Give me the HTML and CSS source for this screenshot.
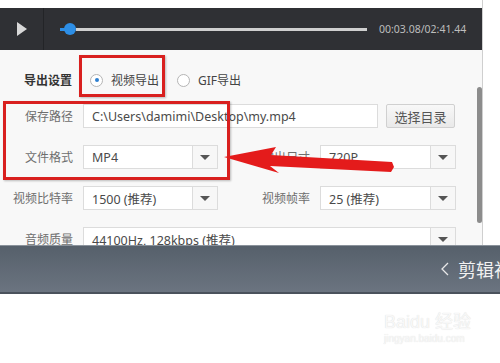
FILE: index.html
```html
<!DOCTYPE html>
<html lang="zh-CN">
<head>
    <meta charset="UTF-8">
    <title>导出设置</title>
    <link rel="stylesheet" href="styles.css">
</head>
<body>
<div class="screen">
    <div class="window">
        <!-- player bar -->
        <div class="player">
            <div class="play">
                <svg width="10" height="14" viewBox="0 0 10 14"><polygon points="0,0 10,7 0,14" fill="#d8d8d8"/></svg>
            </div>
            <div class="track">
                <div class="done"></div>
                <div class="knob"></div>
                <div class="rest"></div>
            </div>
            <div class="time">00:03.08/02:41.44</div>
        </div>

        <!-- export settings -->
        <div class="panel">
            <div class="row head">
                <span class="label strong">导出设置</span>
                <span class="radio on"></span><span class="opt">视频导出</span>
                <span class="radio"></span><span class="opt">GIF导出</span>
            </div>
            <div class="row">
                <span class="label">保存路径</span>
                <div class="field path">C:\Users\damimi\Desktop\my.mp4</div>
                <div class="btn">选择目录</div>
            </div>
            <div class="row">
                <span class="label">文件格式</span>
                <div class="select"><span class="val">MP4</span><span class="drop"></span></div>
                <span class="label second">输出尺寸</span>
                <div class="select wide"><span class="val">720P</span><span class="drop"></span></div>
            </div>
            <div class="row">
                <span class="label">视频比特率</span>
                <div class="select"><span class="val">1500 (推荐)</span><span class="drop"></span></div>
                <span class="label second">视频帧率</span>
                <div class="select wide"><span class="val">25 (推荐)</span><span class="drop"></span></div>
            </div>
            <div class="row">
                <span class="label">音频质量</span>
                <div class="select full"><span class="val">44100Hz, 128kbps (推荐)</span><span class="drop"></span></div>
            </div>
            <div class="scroll"></div>
        </div>
    </div>

    <!-- bottom bar -->
    <div class="footer">
        <svg class="back" width="8" height="14" viewBox="0 0 8 14"><polyline points="7,1 1,7 7,13" fill="none" stroke="#e8e8e8" stroke-width="1.3"/></svg>
        <span class="crumb">剪辑视频</span>
    </div>

    <!-- annotations -->
    <div class="mark mark-radio"></div>
    <div class="mark mark-fields"></div>
    <svg class="arrow" width="500" height="363" viewBox="0 0 500 363">
        <polygon points="224,157 276,147 271,155 392,162 394,167 391,172 270,166 279,173" fill="#e41b1b"/>
    </svg>

    <div class="watermark">
        <div class="logo">Bai<span class="paw">du</span> 经验</div>
        <div class="site">jingyan.baidu.com</div>
    </div>
</div>
</body>
</html>
```

FILE: styles.css
```css
body {
    margin: 0;
    background: #ffffff;
    font-family: "Noto Sans", "Noto Sans CJK SC", sans-serif;
}
.screen {
    position: relative;
    width: 500px;
    height: 363px;
    overflow: hidden;
}
.window {
    width: 482px;
    padding-top: 8px;
    border-right: 1px solid #cfcfcf;
}

/* player */
.player {
    height: 42px;
    background: #2f3034;
    display: flex;
    align-items: center;
}
.play {
    width: 43px;
    height: 42px;
    border-right: 1px solid #232427;
    display: flex;
    align-items: center;
    justify-content: center;
}
.track {
    margin-left: 16px;
    width: 307px;
    display: flex;
    align-items: center;
}
.done {
    width: 5px;
    height: 3px;
    background: #2d8ee6;
}
.knob {
    width: 12px;
    height: 12px;
    border-radius: 50%;
    background: #2d8ee6;
    margin-left: -1px;
}
.rest {
    flex: 1;
    height: 3px;
    background: #cfcfcf;
}
.time {
    margin-left: 12px;
    font-size: 10.5px;
    color: #bdbdbd;
}

/* panel */
.panel {
    position: relative;
    height: 177px;
    padding-top: 18px;
    background: #f8f8f8;
    overflow: hidden;
}
.row {
    display: flex;
    align-items: center;
    height: 24px;
    margin-bottom: 17px;
}
.row.head {
    margin-bottom: 12px;
}
.label {
    width: 73px;
    margin-right: 10px;
    text-align: right;
    font-size: 12px;
    color: #6e6e6e;
    white-space: nowrap;
}
.label.strong {
    width: 72px;
    margin-right: 0;
    font-weight: bold;
    color: #333333;
}
.label.second {
    width: 48px;
    margin-left: 44px;
}
.radio {
    width: 11px;
    height: 11px;
    border: 1px solid #b5b5b5;
    border-radius: 50%;
    background: #ffffff;
    margin-left: 18px;
    display: flex;
    align-items: center;
    justify-content: center;
}
.radio.on::after {
    content: "";
    width: 4px;
    height: 4px;
    border-radius: 50%;
    background: #2d7fd0;
}
.opt {
    margin-left: 8px;
    font-size: 12px;
    color: #444444;
}
.field, .select {
    height: 22px;
    border: 1px solid #dcdcdc;
    background: #ffffff;
    font-size: 12.5px;
    color: #4a4a4a;
    display: flex;
    align-items: center;
}
.field {
    width: 285px;
    padding-left: 8px;
}
.btn {
    margin-left: 8px;
    width: 67px;
    height: 22px;
    border: 1px solid #d0d0d0;
    border-radius: 2px;
    background: linear-gradient(#f8f8f8, #e9e9e9);
    font-size: 13px;
    color: #555555;
    display: flex;
    align-items: center;
    justify-content: center;
}
.select {
    width: 133px;
}
.select.wide {
    width: 134px;
}
.select.full {
    width: 371px;
}
.val {
    flex: 1;
    padding-left: 8px;
    white-space: nowrap;
}
.drop {
    width: 24px;
    height: 22px;
    border-left: 1px solid #dcdcdc;
    background: #f7f7f7;
    display: flex;
    align-items: center;
    justify-content: center;
}
.drop::after {
    content: "";
    border-left: 5px solid transparent;
    border-right: 5px solid transparent;
    border-top: 5px solid #555555;
}
.scroll {
    position: absolute;
    right: 0;
    top: 37px;
    width: 5px;
    height: 136px;
    border-radius: 3px;
    background: #8c8c8c;
}

/* footer */
.footer {
    height: 46px;
    background: linear-gradient(#56606b, #6b7480);
    border-top: 1px solid #8a929b;
    border-bottom: 2px solid #4a525c;
    display: flex;
    align-items: center;
    padding-left: 441px;
    white-space: nowrap;
}
.back {
    flex: none;
}
.crumb {
    flex: none;
    margin-left: 9px;
    font-size: 18px;
    color: #f2f2f2;
    font-family: "Noto Sans CJK SC", sans-serif;
}

/* annotations */
.mark {
    position: absolute;
    border: 3px solid #d9201f;
    box-shadow: 1px 1px 2px rgba(0, 0, 0, 0.25);
}
.mark-radio {
    left: 79px;
    top: 55px;
    width: 80px;
    height: 36px;
}
.mark-fields {
    left: 3px;
    top: 101px;
    width: 221px;
    height: 73px;
}
.arrow {
    position: absolute;
    left: 0;
    top: 0;
}

.watermark {
    position: absolute;
    left: 384px;
    top: 312px;
    color: #f8f8f8;
    text-shadow: 0 0 1px #d6d6d6;
}
.logo {
    font-size: 18px;
    font-family: "Liberation Sans", "Noto Sans CJK SC", sans-serif;
    line-height: 20px;
}
.site {
    font-size: 10px;
    line-height: 14px;
    font-family: "Liberation Sans", sans-serif;
}
```
